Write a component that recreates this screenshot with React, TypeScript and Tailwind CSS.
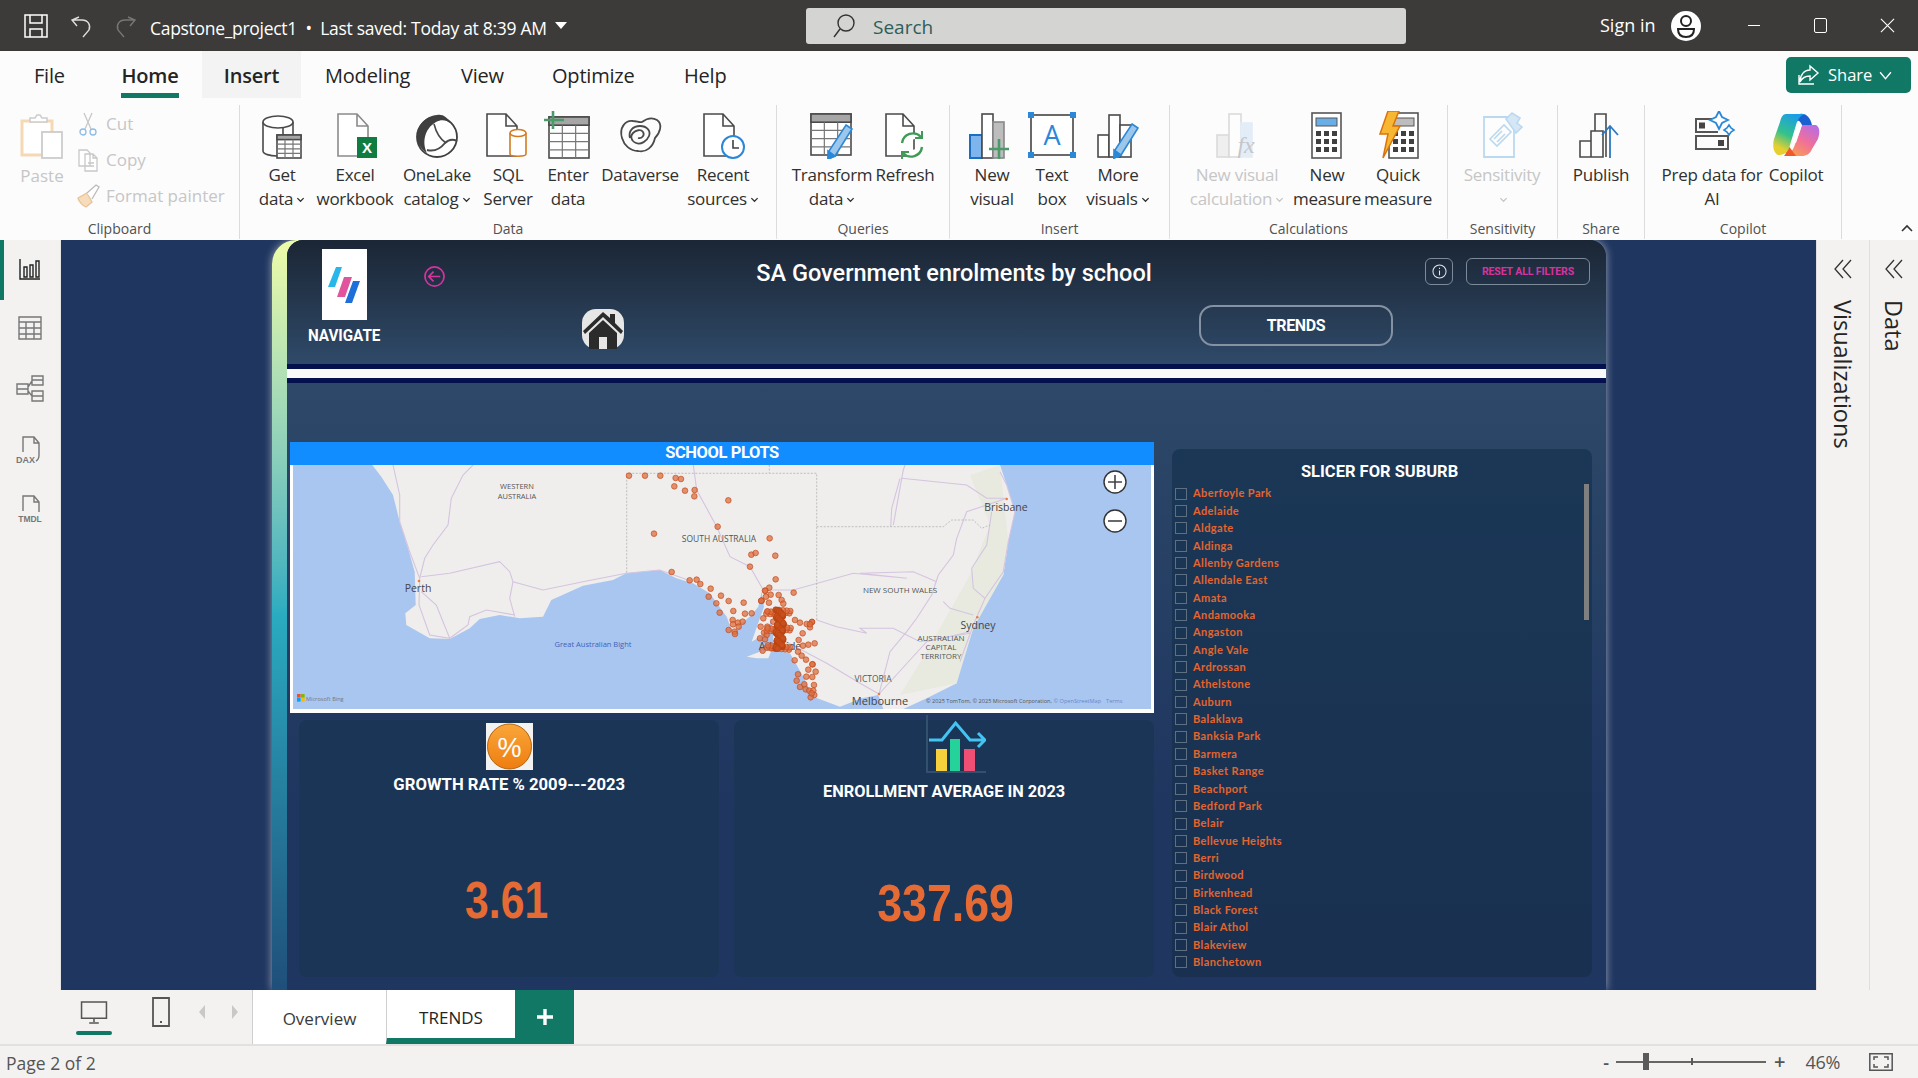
import type { ReactNode } from "react";

const ui = "font-['Open_Sans','Noto_Sans',sans-serif]";
const din = "font-['Roboto','Liberation_Sans',sans-serif]";

// Shared 48x48 icon box for the ribbon
function Ico({ children, dim }: { children: ReactNode; dim?: boolean }) {
	return (
		<svg viewBox="0 0 48 48" className={`h-[48px] w-[48px] shrink-0 ${dim ? "opacity-40" : ""}`} fill="none" stroke="#4a4a4a" strokeWidth="1.6">
			{children}
		</svg>
	);
}

const Doc = ({ x = 6, w = 28, h = 42 }: { x?: number; w?: number; h?: number }) => (
	<path d={`M${x} 3h${w - 11}l11 12v${h - 12}h-${w}zM${x + w - 11} 3v12h11`} fill="#fff" />
);

const Grid = ({ x, y, w, h }: { x: number; y: number; w: number; h: number }) => (
	<g>
		<rect x={x} y={y} width={w} height={h} fill="#fff" />
		<rect x={x} y={y} width={w} height={h / 5} fill="#a6a6a6" />
		<path d={`M${x} ${y + (h * 2) / 5}h${w}M${x} ${y + (h * 3) / 5}h${w}M${x} ${y + (h * 4) / 5}h${w}M${x + w / 3} ${y + h / 5}v${(h * 4) / 5}M${x + (2 * w) / 3} ${y + h / 5}v${(h * 4) / 5}`} strokeWidth="1.2" stroke="#777" />
	</g>
);

const Pencil = ({ dx = 0, dy = 0 }: { dx?: number; dy?: number }) => (
	<g transform={`translate(${dx} ${dy})`}>
		<path d="M38 14l6 4-17 27-7 3 1-8z" fill="#9cc7ea" stroke="#2b88d8" />
		<path d="M20 40l7 5-7 3z" fill="#2b88d8" stroke="#2b88d8" />
	</g>
);

const Bars = () => (
	<g>
		<rect x="4" y="24" width="11" height="22" fill="#fff" />
		<rect x="15" y="4" width="11" height="42" fill="#fff" />
		<rect x="26" y="14" width="11" height="32" fill="#fff" />
	</g>
);

const GetDataIcon = () => (
	<Ico>
		<path d="M5 11v29c0 3 7 5 14 5h6V11" fill="#fff" />
		<ellipse cx="20" cy="11" rx="15" ry="6" fill="#fff" />
		<path d="M35 11v16" />
		<Grid x={19} y={24} w={24} h={23} />
	</Ico>
);

const ExcelIcon = () => (
	<Ico>
		<g stroke="#8a8a8a">
			<Doc x={7} w={30} />
		</g>
		<rect x="26" y="26" width="20" height="21" fill="#107c41" stroke="none" />
		<text x="36" y="42" textAnchor="middle" fontSize="15" fontWeight="700" fill="#fff" stroke="none" fontFamily="Liberation Sans">X</text>
	</Ico>
);

const OneLakeIcon = () => (
	<Ico>
		<circle cx="24" cy="26" r="20" fill="#fff" stroke="#3f3f3f" strokeWidth="1.8" />
		<path d="M24 4C12 5 4 15 4 26c0 6 4 12 10 16-5-10-3-24 9-31 5-3 11-2 14 1-3-6-7-9-13-8z" fill="#3f3f3f" stroke="none" />
		<path d="M21 13c2 8 6 15 12 19" />
		<path d="M14 39c8 2 14-2 18-7 4-4 8-4 12-2" strokeWidth="2" />
	</Ico>
);

const SqlIcon = () => (
	<Ico>
		<Doc x={3} w={30} />
		<path d="M26 22v21c0 3 16 3 16 0V22" fill="#fff" stroke="#d47b20" />
		<ellipse cx="34" cy="22" rx="8" ry="3.5" fill="#fff" stroke="#d47b20" />
	</Ico>
);

const EnterDataIcon = () => (
	<Ico>
		<Grid x={5} y={6} w={40} h={41} />
		<path d="M9 0v18M0 9h20" stroke="#4c9a6a" strokeWidth="2.6" />
	</Ico>
);

const DataverseIcon = () => (
	<Ico>
		<path d="M6 27C3 17 9 9 17 10c4 0 6 2 9 1 4-3 10-5 15-2 6 4 3 13-2 18-2 9-9 15-17 13C14 40 8 34 6 27z" strokeWidth="1.8" />
		<path d="M14 27c-2-7 3-12 10-12 7 0 11 5 9 10s-8 9-13 7-6-7-3-10 8-4 10-1-1 7-5 6" strokeWidth="1.8" />
	</Ico>
);

const RecentIcon = () => (
	<Ico>
		<Doc x={5} w={30} />
		<circle cx="34" cy="36" r="11" fill="#fff" stroke="#2b88d8" strokeWidth="2" />
		<path d="M34 29v8h6" stroke="#404040" strokeWidth="1.6" />
	</Ico>
);

const TransformIcon = () => (
	<Ico>
		<Grid x={3} y={3} w={40} h={41} />
		<Pencil />
	</Ico>
);

const RefreshIcon = () => (
	<Ico>
		<Doc x={5} w={28} />
		<path d="M21 32a11 11 0 0 1 19-6M41 36a11 11 0 0 1-19 6" stroke="#3e9a56" strokeWidth="2.4" fill="#fff" />
		<path d="M41 20v7h-7M21 48v-7h7" stroke="#3e9a56" strokeWidth="2" />
	</Ico>
);

const NewVisualIcon = () => (
	<Ico>
		<rect x="2" y="24" width="12" height="23" fill="#7eb5ec" stroke="#1c6fc0" strokeWidth="2" />
		<rect x="14" y="3" width="11" height="44" fill="#fff" />
		<rect x="25" y="11" width="11" height="36" fill="#bdbdbd" stroke="#888" />
		<path d="M31 28v20M21 38h20" stroke="#4c9a6a" strokeWidth="2.6" />
	</Ico>
);

const TextBoxIcon = () => (
	<Ico>
		<rect x="3" y="4" width="42" height="40" fill="#fff" stroke="#444" strokeWidth="1.6" />
		<text x="24" y="34" textAnchor="middle" fontSize="27" fill="#2b88d8" stroke="none" fontFamily="Open Sans">A</text>
		<g fill="#2b88d8" stroke="none">
			<rect x="0" y="1" width="6" height="6" />
			<rect x="42" y="1" width="6" height="6" />
			<rect x="0" y="41" width="6" height="6" />
			<rect x="42" y="41" width="6" height="6" />
		</g>
	</Ico>
);

const MoreVisualsIcon = () => (
	<Ico>
		<Bars />
		<Pencil dx={0} dy={-1} />
	</Ico>
);

const VisualCalcIcon = () => (
	<Ico dim>
		<rect x="4" y="24" width="12" height="22" fill="#ddd" stroke="#aaa" />
		<rect x="16" y="3" width="12" height="43" fill="#fff" stroke="#aaa" />
		<rect x="28" y="12" width="11" height="34" fill="#bcd8f2" stroke="#bcd8f2" />
		<text x="33" y="42" textAnchor="middle" fontSize="24" fontStyle="italic" fill="#777" stroke="none" fontFamily="Liberation Serif">fx</text>
	</Ico>
);

const Calculator = ({ accent }: { accent: string }) => (
	<g>
		<rect x="9" y="2" width="29" height="45" fill="#fff" stroke="#555" />
		<rect x="13" y="7" width="21" height="8" fill={accent} stroke="#555" strokeWidth="1" />
		{[20, 28, 36].map((y) => (
			<g key={y} fill="#404040" stroke="none">
				<rect x="13" y={y} width="5" height="5" />
				<rect x="21" y={y} width="5" height="5" />
				<rect x="29" y={y} width="5" height="5" />
			</g>
		))}
	</g>
);

const NewMeasureIcon = () => (
	<Ico>
		<Calculator accent="#6aaee8" />
	</Ico>
);

const QuickMeasureIcon = () => (
	<Ico>
		<g transform="translate(6 0)">
			<Calculator accent="#bdbdbd" />
		</g>
		<path d="M14 0h11l-6 15h7L9 47l5-24H6z" fill="#f7b733" stroke="#d9730d" strokeWidth="1.5" />
	</Ico>
);

const SensitivityIcon = () => (
	<Ico dim>
		<path d="M6 6h30v40H6z" fill="#fff" stroke="#5aa7e0" strokeWidth="1.8" />
		<path d="M12 28l14-14 7 7-14 14zM16 28l8-8M19 31l8-8" stroke="#5aa7e0" />
		<path d="M28 8l6-6 8 5-3 5 5 4-6 6z" fill="#9cc7ea" stroke="#5aa7e0" />
	</Ico>
);

const PublishIcon = () => (
	<Ico>
		<path d="M3 30h11v16H3zM14 20h12v26H14zM18 20V3h11v43" />
		<path d="M33 47V15M25 24l8-9 8 9" stroke="#2b79c2" strokeWidth="1.8" />
	</Ico>
);

const PrepDataIcon = () => (
	<Ico>
		<path d="M30 8H8v13h22" stroke="#555" strokeWidth="2" />
		<rect x="11" y="11.5" width="6" height="6" fill="#444" stroke="none" />
		<rect x="8" y="25" width="32" height="13" stroke="#555" strokeWidth="2" />
		<rect x="30" y="29" width="6" height="6" fill="#444" stroke="none" />
		<path d="M31 0l3 6 6 3-6 3-3 6-3-6-6-3 6-3z" fill="#fff" stroke="#2b88d8" strokeWidth="1.8" />
		<path d="M41 14l2 3 3 2-3 2-2 3-2-3-3-2 3-2z" fill="#fff" stroke="#2b88d8" strokeWidth="1.6" />
	</Ico>
);

const CopilotIcon = () => (
	<svg viewBox="0 0 48 48" className="h-[48px] w-[48px] shrink-0">
		<defs>
			<linearGradient id="cpA" x1="0.6" y1="0" x2="0.2" y2="1">
				<stop offset="0" stopColor="#1b9de8" />
				<stop offset="0.5" stopColor="#35c28a" />
				<stop offset="0.85" stopColor="#e6d030" />
			</linearGradient>
			<linearGradient id="cpB" x1="0.9" y1="0" x2="0.2" y2="1">
				<stop offset="0" stopColor="#b46ce8" />
				<stop offset="0.5" stopColor="#f0709a" />
				<stop offset="1" stopColor="#f9a24a" />
			</linearGradient>
		</defs>
		<path d="M28 3c6-1 10 3 12 11H30c-2-4-4-6-6-2z" fill="#1c5fd0" />
		<path d="M30 14h14c4 2 4 8 2 14l-6 10c-2 5-6 7-10 7H12c6-1 8-5 10-9l6-16z" fill="url(#cpB)" />
		<path d="M16 34l8 11H12c2-2 3-6 4-11z" fill="#ef5a2a" />
		<path d="M14 3h20c-6 1-8 5-10 11l-6 20c-2 8-6 10-12 10-4-2-6-8-4-16L8 11c1-5 3-8 6-8z" fill="url(#cpA)" />
		<path d="M26 14h4l-6 18h-4z" fill="#fff" opacity="0.9" />
	</svg>
);

const PasteIcon = () => (
	<svg viewBox="0 0 44 46" className="h-[46px] w-[44px]" fill="none">
		<path d="M2 8h30v34H2z" fill="#fff" stroke="#f5d9b5" strokeWidth="3" />
		<path d="M10 9V5h5l2-3h3l2 3h5v4z" fill="#fff" stroke="#ccc" strokeWidth="1.5" />
		<rect x="22" y="19" width="20" height="26" fill="#fff" stroke="#ccc" strokeWidth="1.8" />
	</svg>
);

const SmallDisabled = ({ kind }: { kind: "cut" | "copy" | "paint" }) => (
	<svg viewBox="0 0 24 24" className="h-[24px] w-[24px]" fill="none" stroke="#c8c8c8" strokeWidth="1.3">
		{kind === "cut" && (
			<g>
				<path d="M8 1l7 16M16 1L9 17" />
				<circle cx="7" cy="20" r="3" stroke="#8fbce6" />
				<circle cx="17" cy="20" r="3" stroke="#8fbce6" />
			</g>
		)}
		{kind === "copy" && <path d="M3 2h8l3 3v13H3zM9 6h8l4 4v13H9zM17 6v4h4M12 15h6M12 18h6" fill="#fff" />}
		{kind === "paint" && (
			<g>
				<path d="M2 14l9-5 5 9-6 5c-3-1-7-5-8-9z" fill="#f7dcbc" stroke="#e8c39a" />
				<path d="M11 9l9-8 3 2-7 12" stroke="#bbb" fill="#fff" />
			</g>
		)}
	</svg>
);

type Item = { w: number; icon: ReactNode; top: string; bottom?: string; caret?: boolean; dim?: boolean };

const Caret = () => (
	<svg viewBox="0 0 10 10" className="ml-[3px] inline-block h-[9px] w-[9px]" fill="none" stroke="currentColor" strokeWidth="1.4">
		<path d="M1.5 3.5L5 7l3.5-3.5" />
	</svg>
);

function RibbonItem({ w, icon, top, bottom, caret, dim }: Item) {
	return (
		<div style={{ width: w }} className={`flex shrink-0 flex-col items-center whitespace-nowrap pt-[5px] text-[17px] leading-[24px] tracking-[-0.25px] ${dim ? "text-[#c6c6c6]" : "text-[#303030]"}`}>
			<div className="flex h-[50px] items-center justify-center">{icon}</div>
			<div className="mt-[3px] flex h-[24px] items-center">{top}</div>
			<div className="flex h-[24px] items-center">
				{bottom}
				{caret && <Caret />}
			</div>
		</div>
	);
}

function RibbonGroup({ w, label, children }: { w: number; label: string; children: ReactNode }) {
	return (
		<div style={{ width: w }} className="flex h-[134px] shrink-0 flex-col border-r border-[#dcdcdc]">
			<div className="flex flex-1">{children}</div>
			<div className="text-center text-[14px] leading-[20px] text-[#505050]">{label}</div>
		</div>
	);
}

function TitleBar() {
	return (
		<div className="flex h-[51px] items-center bg-[#3c3b39] text-white">
			<svg viewBox="0 0 24 24" className="ml-[24px] h-[24px] w-[24px]" fill="none" stroke="#fff" strokeWidth="1.5">
				<path d="M1 1h22v22H1zM6 1v8h12V1M6 23v-8h12v8" />
			</svg>
			<svg viewBox="0 0 24 24" className="ml-[21px] h-[24px] w-[24px]" fill="none" stroke="#ddd" strokeWidth="1.4">
				<path d="M8 12L3 6l7-3M3 6h10c6 0 9 5 7 10l-6 7" />
			</svg>
			<svg viewBox="0 0 24 24" className="ml-[21px] h-[24px] w-[24px]" fill="none" stroke="#777" strokeWidth="1.4">
				<path d="M16 12l5-6-7-3M21 6H11C5 6 2 11 4 16l6 7" />
			</svg>
			<div className={`${ui} ml-[12px] w-[396px] whitespace-nowrap pt-[6px] text-[17.5px] tracking-[-0.3px]`}>Capstone_project1 &nbsp;•&nbsp; Last saved: Today at 8:39 AM</div>
			<div className="ml-[9px] h-0 w-0 border-x-[6px] border-t-[7px] border-x-transparent border-t-white" />
			<div className="ml-[239px] flex h-[36px] w-[600px] items-center rounded-[3px] bg-[#d4d4d2]">
				<svg viewBox="0 0 24 24" className="ml-[26px] h-[24px] w-[24px]" fill="none" stroke="#333" strokeWidth="1.4">
					<circle cx="14" cy="9" r="8" />
					<path d="M8 15l-6 8" />
				</svg>
				<span className={`${ui} ml-[17px] pt-[3px] text-[19px] text-[#2f5d59]`}>Search</span>
			</div>
			<div className={`${ui} ml-[194px] text-[18px]`}>Sign in</div>
			<svg viewBox="0 0 30 30" className="ml-[15px] h-[30px] w-[30px]">
				<circle cx="15" cy="15" r="15" fill="#fff" />
				<circle cx="15" cy="10" r="5" fill="none" stroke="#222" strokeWidth="2" />
				<path d="M7 18h16c0 6-3 8-8 8s-8-2-8-8z" fill="none" stroke="#222" strokeWidth="2" />
			</svg>
			<div className="ml-[47px] h-[1.5px] w-[12px] bg-white" />
			<div className="ml-[54px] h-[15px] w-[13px] rounded-[2px] border border-white" />
			<svg viewBox="0 0 16 16" className="ml-[53px] h-[15px] w-[15px]" fill="none" stroke="#fff" strokeWidth="1.2">
				<path d="M1 1l14 14M15 1L1 15" />
			</svg>
		</div>
	);
}

function Ribbon() {
	return (
		<div className={`${ui} h-[189px] bg-[#fcfcfc] shadow-[0_1px_3px_rgba(0,0,0,0.15)]`}>
			<div className="flex h-[47px] pr-[7px]">
				<div className="flex h-full pl-[34px] text-[20px] tracking-[-0.2px] text-[#252423]">
					<div className="flex w-[87px] items-center pt-[3px]">File</div>
					<div className="flex w-[81px] flex-col font-semibold">
						<span className="flex h-full w-[58px] items-center justify-center border-b-[5px] border-[#117865] pt-[8px]">Home</span>
					</div>
					<div className="flex w-[99px] items-center justify-center bg-[#f3f3f3] pt-[3px] font-semibold">Insert</div>
					<div className="ml-[24px] flex w-[136px] items-center pt-[3px]">Modeling</div>
					<div className="flex w-[91px] items-center pt-[3px]">View</div>
					<div className="flex w-[132px] items-center pt-[3px]">Optimize</div>
					<div className="flex items-center pt-[3px]">Help</div>
				</div>
				<div className="ml-auto mt-[6px] flex h-[36px] w-[125px] items-center rounded-[5px] bg-[#117865] pl-[10px] text-[16.5px] text-white">
					<svg viewBox="0 0 24 24" className="h-[24px] w-[24px]" fill="none" stroke="#fff" strokeWidth="1.4">
						<path d="M3 12v9h15M14 3l8 7-8 7v-4c-5 0-8 2-10 6 0-7 4-12 10-12z" />
					</svg>
					<span className="ml-[8px]">Share</span>
					<svg viewBox="0 0 12 12" className="ml-[7px] h-[13px] w-[13px]" fill="none" stroke="#fff" strokeWidth="1.2">
						<path d="M1 3l5 6 5-6" />
					</svg>
				</div>
			</div>

			<div className="flex pt-[7px]">
				<RibbonGroup w={240} label="Clipboard">
					<div className="flex w-[84px] shrink-0 flex-col items-center text-[17px] text-[#c6c6c6]">
						<div className="mt-[8px]">
							<PasteIcon />
						</div>
						<div className="mt-[5px] leading-[24px]">Paste</div>
					</div>
					<div className="-ml-[8px] flex flex-col pt-[1px] text-[17px] leading-[36px] text-[#c6c6c6]">
						<div className="flex items-center gap-[6px]">
							<SmallDisabled kind="cut" />
							Cut
						</div>
						<div className="flex items-center gap-[6px]">
							<SmallDisabled kind="copy" />
							Copy
						</div>
						<div className="flex items-center gap-[6px] whitespace-nowrap">
							<SmallDisabled kind="paint" />
							Format painter
						</div>
					</div>
				</RibbonGroup>
				<RibbonGroup w={537} label="Data">
					<RibbonItem w={84} icon={<GetDataIcon />} top="Get" bottom="data" caret />
					<RibbonItem w={62} icon={<ExcelIcon />} top="Excel" bottom="workbook" />
					<RibbonItem w={102} icon={<OneLakeIcon />} top="OneLake" bottom="catalog" caret />
					<RibbonItem w={40} icon={<SqlIcon />} top="SQL" bottom="Server" />
					<RibbonItem w={80} icon={<EnterDataIcon />} top="Enter" bottom="data" />
					<RibbonItem w={64} icon={<DataverseIcon />} top="Dataverse" />
					<RibbonItem w={102} icon={<RecentIcon />} top="Recent" bottom="sources" caret />
				</RibbonGroup>
				<RibbonGroup w={173} label="Queries">
					<RibbonItem w={110} icon={<TransformIcon />} top="Transform" bottom="data" caret />
					<RibbonItem w={36} icon={<RefreshIcon />} top="Refresh" />
				</RibbonGroup>
				<RibbonGroup w={220} label="Insert">
					<RibbonItem w={84} icon={<NewVisualIcon />} top="New" bottom="visual" />
					<RibbonItem w={36} icon={<TextBoxIcon />} top="Text" bottom="box" />
					<RibbonItem w={96} icon={<MoreVisualsIcon />} top="More" bottom="visuals" caret />
				</RibbonGroup>
				<RibbonGroup w={278} label="Calculations">
					<RibbonItem w={134} icon={<VisualCalcIcon />} top="New visual" bottom="calculation" caret dim />
					<RibbonItem w={46} icon={<NewMeasureIcon />} top="New" bottom="measure" />
					<RibbonItem w={96} icon={<QuickMeasureIcon />} top="Quick" bottom="measure" />
				</RibbonGroup>
				<RibbonGroup w={110} label="Sensitivity">
					<RibbonItem w={108} icon={<SensitivityIcon />} top="Sensitivity" caret dim />
				</RibbonGroup>
				<RibbonGroup w={87} label="Share">
					<RibbonItem w={86} icon={<PublishIcon />} top="Publish" />
				</RibbonGroup>
				<RibbonGroup w={197} label="Copilot">
					<RibbonItem w={134} icon={<PrepDataIcon />} top="Prep data for" bottom="AI" />
					<RibbonItem w={34} icon={<CopilotIcon />} top="Copilot" />
				</RibbonGroup>
				<div className="flex flex-1 items-end justify-end pb-[7px] pr-[5px]">
					<svg viewBox="0 0 12 8" className="h-[8px] w-[12px]" fill="none" stroke="#333" strokeWidth="1.6">
						<path d="M1 7l5-5 5 5" />
					</svg>
				</div>
			</div>
		</div>
	);
}

function LeftRail() {
	return (
		<div className="flex w-[61px] shrink-0 flex-col items-center border-r border-[#e4e4e4] bg-[#f3f2f1]">
			<div className="flex h-[60px] w-full items-center justify-center border-l-[4px] border-[#117865]">
				<svg viewBox="0 0 22 22" className="-ml-[4px] h-[22px] w-[22px]" fill="none" stroke="#222" strokeWidth="1.4">
					<path d="M1 0v20h20M5 8h3v10H5zM11 6h3v12h-3zM17 2h3v16h-3z" />
				</svg>
			</div>
			<svg viewBox="0 0 24 24" className="mt-[16px] h-[24px] w-[24px]" fill="none" stroke="#777" strokeWidth="1.4">
				<path d="M1 1h22v22H1zM1 6h22M1 12h22M1 18h22M8 6v17M16 6v17" />
			</svg>
			<svg viewBox="0 0 28 28" className="mt-[35px] h-[28px] w-[28px]" fill="none" stroke="#777" strokeWidth="1.4">
				<path d="M1 9h11v10H1zM1 14h11M16 1h11v9H16zM16 5h11M16 16h11v10H16zM16 21h11M12 12l4-6M12 16l4 5" />
			</svg>
			<svg viewBox="0 0 28 28" className="mt-[33px] h-[28px] w-[28px]" fill="none" stroke="#777" strokeWidth="1.4">
				<path d="M7 16V1h11l5 6v12c0 4-1 5-3 6M18 1v6h5" />
				<text x="0" y="27" fontSize="9" fontWeight="700" fill="#777" stroke="none" fontFamily="Liberation Sans">DAX</text>
			</svg>
			<svg viewBox="0 0 28 28" className="mt-[31px] h-[28px] w-[28px]" fill="none" stroke="#777" strokeWidth="1.4">
				<path d="M7 16V1h11l5 6v10M18 1v6h5" />
				<text x="14" y="27" textAnchor="middle" fontSize="8.5" fontWeight="700" fill="#777" stroke="none" fontFamily="Liberation Sans">TMDL</text>
			</svg>
		</div>
	);
}

// Map points are read off the picture at 3x, each group has its own origin
const W = (x: number, y: number) => `${(293 + x / 3).toFixed(1)} ${(465 + y / 3).toFixed(1)}`;
const S = (x: number, y: number) => `${(560 + x / 3).toFixed(1)} ${(450 + y / 3).toFixed(1)}`;
const E = (x: number, y: number) => `${(860 + x / 3).toFixed(1)} ${(465 + y / 3).toFixed(1)}`;

const coast =
	"M" +
	[
		W(238, 0), W(265, 35), W(300, 90), W(320, 170), W(345, 250), W(365, 320), W(368, 420), W(337, 445), W(340, 480), W(410, 520), W(470, 522),
		W(530, 490), W(560, 462), W(620, 450), W(680, 460), W(750, 455), W(775, 405), W(870, 362), W(960, 345), W(1000, 325), W(1100, 315),
		W(1150, 340), W(1200, 355), W(1250, 385), W(1290, 440), S(500, 500), S(520, 555), S(545, 520), S(575, 495), S(595, 470), S(605, 425),
		S(612, 470), S(598, 510), S(575, 575), S(600, 560), S(625, 545), S(632, 505), S(640, 560), S(640, 600), S(690, 610), S(730, 680),
		S(760, 740), S(840, 770), S(905, 745), S(955, 735), E(70, 732), E(130, 732), E(200, 700), E(290, 655), E(300, 590), E(340, 490),
		E(375, 400), E(430, 330), E(445, 230), E(465, 140), E(440, 60), E(420, 0),
	].join("L") +
	"Z";

const island = "M" + [S(560, 620), S(600, 605), S(635, 600), S(625, 625), S(590, 625)].join("L") + "Z";
const hills = "M" + [E(330, 30), E(420, 0), E(445, 230), E(430, 330), E(340, 490), E(290, 655), E(120, 690), E(200, 560), E(330, 330), E(390, 180)].join("L") + "Z";

const line = (pts: string[]) => "M" + pts.join("L");

const roads = [
	line([W(540, 0), W(510, 30), W(475, 100), W(465, 180), W(420, 240), W(395, 280), W(380, 340)]),
	line([W(300, 0), W(320, 90), W(320, 170), W(350, 260), W(380, 340), W(378, 420), W(410, 510), W(470, 520), W(525, 480), W(530, 455), W(580, 435), W(665, 450)]),
	line([W(385, 335), W(470, 325), W(620, 290), W(650, 320), W(660, 350), W(750, 375), W(870, 350), W(1000, 325), W(1100, 315), W(1200, 350)]),
	line([W(660, 350), W(650, 400), W(665, 455)]),
	line([W(385, 380), W(430, 420), W(470, 520)]),
	line([S(400, 45), S(410, 120), S(470, 230), S(510, 320), S(570, 350), S(610, 420)]),
	line([S(610, 420), S(700, 420), S(880, 370), S(1040, 385), E(0, 325), E(160, 320), E(230, 350)]),
	line([S(1000, 225), S(1030, 60), E(135, 0)]),
	line([S(650, 560), S(800, 640), S(900, 700), E(57, 687)]),
	line([S(770, 510), S(830, 530), S(920, 550), E(0, 490), E(100, 490), E(180, 530), E(330, 505)]),
	line([E(120, 40), E(95, 130), E(92, 185)]),
	line([E(125, 40), E(320, 60), E(380, 100), E(440, 100)]),
	line([E(440, 100), E(320, 140), E(290, 220), E(280, 270), E(235, 330), E(215, 390), E(170, 460), E(140, 500), E(90, 560), E(57, 687)]),
	line([E(395, 140), E(380, 240), E(335, 310), E(340, 370), E(375, 400)]),
	line([E(57, 687), E(150, 585), E(200, 530), E(330, 500)]),
	line([E(250, 410), E(270, 430), E(340, 450)]),
	line([E(420, 20), E(440, 60), E(465, 140), E(445, 230), E(430, 320), E(375, 400), E(340, 480), E(300, 590)]),
];

const borders = [line([S(200, 368), S(200, 70), S(770, 70), S(770, 510)]), line([S(628, 45), S(628, 68)]), line([S(770, 230), E(0, 185), E(250, 185), E(275, 165), E(340, 165), E(365, 190), E(390, 180)])];

const scatter: [number, number][] = [
	[207, 77], [255, 77], [301, 77], [347, 84], [363, 87], [343, 109], [375, 122], [404, 120], [403, 139], [505, 151], [473, 230], [282, 251],
	[629, 265], [574, 314], [587, 309], [646, 317], [570, 350], [647, 388], [335, 366], [389, 391], [410, 389], [421, 402], [452, 416], [628, 413],
	[701, 428], [446, 440], [483, 437], [506, 453], [469, 460], [551, 458], [479, 488], [520, 483], [555, 491], [575, 490], [518, 510], [534, 518],
	[548, 515], [519, 523], [536, 530], [506, 540], [524, 545], [525, 552], [605, 452], [604, 453], [616, 422], [632, 434], [656, 435], [665, 450],
	[670, 461], [627, 458], [705, 510], [720, 518], [740, 522], [756, 516], [750, 532], [728, 550], [716, 570], [764, 580], [745, 584], [729, 587],
	[714, 605], [725, 617], [738, 629], [704, 631], [758, 643], [745, 659], [767, 665], [714, 673], [739, 680], [757, 681], [710, 692], [720, 711],
	[733, 703], [762, 705], [737, 718], [748, 722], [760, 722], [763, 735], [752, 742], [755, 730], [610, 505], [602, 530], [622, 530], [612, 548],
	[620, 555], [600, 565], [615, 568], [608, 602], [635, 595], [623, 485], [640, 515], [615, 422], [604, 452], [756, 516], [750, 523], [757, 643],
];

// Dense Adelaide suburbs: a narrow core and a wider spread around it
const core: [number, number][] = Array.from({ length: 160 }, (_, i) => [648 + ((i * 37) % 23), 480 + ((i * 61) % 117)]);
const spread: [number, number][] = Array.from({ length: 45 }, (_, i) => [618 + ((i * 23) % 80), 440 + ((i * 53) % 160)]);

function MapVisual() {
	return (
		<div className="h-[271px] w-[864px]">
			<div className={`${din} flex h-[23px] items-center justify-center bg-[#118dff] text-[16.5px] font-bold tracking-[-0.4px] text-white`}>SCHOOL PLOTS</div>
			<div className="relative h-[248px] border-x-[3px] border-b-[4px] border-white bg-[#a9c6f0]">
				<svg viewBox="293 465 858 244" className="block h-[244px] w-[858px]" fontFamily="Open Sans">
					<path d={coast} fill="#efeeec" />
					<path d={island} fill="#efeeec" />
					<path d={hills} fill="#e8eae0" />
					{roads.map((d) => (
						<path key={d} d={d} fill="none" stroke="#d4c4e0" strokeWidth="1.1" />
					))}
					{borders.map((d) => (
						<path key={d} d={d} fill="none" stroke="#aaa" strokeWidth="0.7" strokeDasharray="2 1.5" />
					))}
					<g fill="#ef7d3c">
						<circle cx="419" cy="581" r="1.3" />
						<circle cx="1006.7" cy="499" r="1.3" />
						<circle cx="977.3" cy="617.3" r="1.3" />
						<circle cx="879" cy="694" r="1.3" />
					</g>
					<g fill="#555" textAnchor="middle" fontSize="7.5">
						<text x="517" y="489">WESTERN</text>
						<text x="517" y="499">AUSTRALIA</text>
						<text x="719" y="542" fontSize="8.5">SOUTH AUSTRALIA</text>
						<text x="900" y="593" fontSize="8">NEW SOUTH WALES</text>
						<text x="941" y="641" fontSize="8">AUSTRALIAN</text>
						<text x="941" y="650" fontSize="8">CAPITAL</text>
						<text x="941" y="659" fontSize="8">TERRITORY</text>
						<text x="873" y="682" fontSize="8.5">VICTORIA</text>
					</g>
					<g fill="#444" textAnchor="middle" fontSize="10.5">
						<text x="418" y="592">Perth</text>
						<text x="1006" y="511">Brisbane</text>
						<text x="978" y="629">Sydney</text>
						<text x="880" y="705" fontSize="11">Melbourne</text>
						<text x="780" y="650">Adelaide</text>
					</g>
					<text x="593" y="647" textAnchor="middle" fontSize="7.5" fill="#3f62b5">Great Australian Bight</text>
					<text x="926" y="702.5" fontSize="5.6" fill="#555">
						© 2025 TomTom, © 2025 Microsoft Corporation, <tspan fill="#6b86c8">© OpenStreetMap</tspan>
						<tspan fill="#6b86c8" dx="5">Terms</tspan>
					</text>
					<g>
						<rect x="297" y="694" width="3.6" height="3.6" fill="#f25022" />
						<rect x="301" y="694" width="3.6" height="3.6" fill="#7fba00" />
						<rect x="297" y="698" width="3.6" height="3.6" fill="#00a4ef" />
						<rect x="301" y="698" width="3.6" height="3.6" fill="#ffb900" />
					</g>
					<text x="306" y="700.5" fontSize="5.6" fill="#777">Microsoft Bing</text>
					<g transform="translate(560 450) scale(0.3333)">
						{[...scatter, ...spread].map(([x, y], i) => (
							<circle key={i} cx={x} cy={y} r="8.5" fill="#dd6f40" fillOpacity="0.75" stroke="#c2491a" strokeWidth="2" />
						))}
						{core.map(([x, y], i) => (
							<circle key={i} cx={x} cy={y} r="8.5" fill="#c9501f" fillOpacity="0.8" stroke="#b8420f" strokeWidth="2" />
						))}
					</g>
				</svg>
				<div className="absolute right-[24px] top-[5px] flex flex-col gap-[15px]">
					<ZoomDot sign="+" />
					<ZoomDot sign="-" />
				</div>
			</div>
		</div>
	);
}

function ZoomDot({ sign }: { sign: "+" | "-" }) {
	return (
		<svg viewBox="0 0 24 24" className="h-[24px] w-[24px]" fill="none">
			<circle cx="12" cy="12" r="11" fill="#fff" stroke="#333" strokeWidth="1.4" />
			<path d={sign === "+" ? "M5 12h14M12 5v14" : "M5 12h14"} stroke="#444" strokeWidth="1.6" />
		</svg>
	);
}

const PercentBadge = () => (
	<svg viewBox="0 0 47 47" className="h-[47px] w-[47px]">
		<defs>
			<linearGradient id="pc" x1="0" y1="0" x2="0" y2="1">
				<stop offset="0" stopColor="#f9a63a" />
				<stop offset="1" stopColor="#ef7d10" />
			</linearGradient>
		</defs>
		<rect width="47" height="47" fill="#f2f2f2" />
		<ellipse cx="23.5" cy="23.5" rx="22" ry="22.5" fill="url(#pc)" stroke="#b4650f" />
		<text x="23.5" y="34" textAnchor="middle" fontSize="27" fill="#fff" fontFamily="Liberation Sans">%</text>
	</svg>
);

const TrendBadge = () => (
	<svg viewBox="0 0 60 60" className="-mt-[8px] ml-[24px] h-[60px] w-[60px]" fill="none">
		<path d="M1 0v57h59" stroke="#33506f" strokeWidth="2" />
		<rect x="10" y="34" width="11" height="22" fill="#f7d13c" />
		<rect x="24" y="24" width="10" height="32" fill="#25d39a" />
		<rect x="38" y="34" width="11" height="22" fill="#ee4f72" />
		<path d="M3 25h13L29.6 8 44 25h14M52 18l7 7-7 7" stroke="#43c4f2" strokeWidth="3" />
	</svg>
);

type Kpi = { title: string; value: string; icon: ReactNode; titleClass: string; valueClass: string };

function KpiCard({ title, value, icon, titleClass, valueClass }: Kpi) {
	return (
		<div className="flex h-[257px] w-[421px] flex-col items-center rounded-[8px] bg-[#1b3556]">
			<div className="h-[50px] pt-[3px]">{icon}</div>
			<div className={`${din} ${titleClass} whitespace-nowrap text-[17px] font-bold leading-[22px] text-white`}>{title}</div>
			<div className={`${valueClass} font-['Liberation_Sans',sans-serif] text-[52px] font-bold leading-[52px] text-[#e66a34]`}>{value}</div>
		</div>
	);
}

const suburbs = [
	"Aberfoyle Park", "Adelaide", "Aldgate", "Aldinga", "Allenby Gardens", "Allendale East", "Amata", "Andamooka", "Angaston", "Angle Vale",
	"Ardrossan", "Athelstone", "Auburn", "Balaklava", "Banksia Park", "Barmera", "Basket Range", "Beachport", "Bedford Park", "Belair",
	"Bellevue Heights", "Berri", "Birdwood", "Birkenhead", "Black Forest", "Blair Athol", "Blakeview", "Blanchetown",
];

function Slicer() {
	return (
		<div className="ml-[18px] mt-[7px] flex h-[528px] w-[420px] flex-col rounded-[8px] bg-gradient-to-b from-[#1b3756] to-[#193050] px-[3px]">
			<div className={`${din} mt-[11px] h-[23px] scale-x-[0.97] pr-[5px] text-center text-[17px] font-bold leading-[23px] text-white`}>SLICER FOR SUBURB</div>
			<div className="flex">
				<div className="flex-1 pt-[2px]">
					{suburbs.map((s) => (
						<div key={s} className="flex h-[17.37px] items-center">
							<span className="h-[12px] w-[12px] border border-[#5f6f82]" />
							<span className="ml-[6px] font-['Lato',sans-serif] text-[11px] font-bold tracking-[0.4px] text-[#e4652d]">{s}</span>
						</div>
					))}
				</div>
				<div className="mt-[1px] h-[136px] w-[5px] bg-[#7f7f7f]" />
			</div>
		</div>
	);
}

function ReportPage() {
	return (
		<div className="ml-[211px] w-[1334px] rounded-tl-[24px] rounded-tr-[16px] bg-gradient-to-b from-[#eefca8] via-[#2aabc0] to-[#1f4f7a] pl-[15px] shadow-[0_0_9px_rgba(255,255,255,0.55)]">
			<div className="h-full rounded-t-[16px] bg-[#1f3660]">
				<div className="flex h-[124px] rounded-t-[16px] bg-gradient-to-b from-[#1b2635] to-[#2f4a69]">
					<div className="ml-[20px] flex w-[74px] flex-col items-center pt-[9px]">
						<div className="flex h-[71px] w-[45px] items-center justify-center bg-white">
							<svg viewBox="0 0 32 36" className="h-[36px] w-[32px]">
								<path d="M8 0h6L7 20H0z" fill="#29b6e8" />
								<path d="M16 10h8l-7 20H9z" fill="#e0559b" />
								<path d="M25 14h7l-8 22h-7z" fill="#1e6fd9" />
							</svg>
						</div>
						<div className={`${din} mt-[6px] scale-x-[0.95] whitespace-nowrap text-[16px] font-bold leading-[20px] text-white`}>NAVIGATE</div>
					</div>
					<svg viewBox="0 0 22 22" className="ml-[43px] mt-[26px] h-[21px] w-[21px]" fill="none" stroke="#d6339f" strokeWidth="1.8">
						<circle cx="11" cy="11" r="10" />
						<path d="M17 11H5M10 6l-5 5 5 5" />
					</svg>
					<div className="ml-[137px] mt-[69px] flex h-[40px] w-[42px] items-center justify-center rounded-[14px] bg-[#e6e6e6]">
						<svg viewBox="0 0 42 40" className="h-[40px] w-[42px]" fill="#2b2b2b">
							<path d="M21 3L1 22l2 3L21 8l18 17 2-3-8-8V5h-5v4z" />
							<path d="M21 11L7 24v16h10V28h8v12h10V24z" />
						</svg>
					</div>
					<div className={`${din} ml-[85px] mt-[17px] h-[32px] w-[490px] text-center text-[23.5px] font-medium leading-[32px] text-white`}>SA Government enrolments by school</div>
					<div className="flex flex-col pt-[18px]">
						<div className="ml-[226px] flex gap-[13px]">
							<div className="flex h-[27px] w-[28px] items-center justify-center rounded-[6px] border border-[#7d8a9a]">
								<svg viewBox="0 0 16 16" className="h-[15px] w-[15px]" fill="none" stroke="#e6e6e6" strokeWidth="1.1">
									<circle cx="8" cy="8" r="7" />
									<path d="M8 7v5M8 4v1.4" />
								</svg>
							</div>
							<div className={`${din} flex h-[27px] w-[124px] items-center justify-center rounded-[6px] border border-[#7d8a9a] text-[10.5px] font-bold tracking-[-0.1px] text-[#d6339f]`}>RESET ALL FILTERS</div>
						</div>
						<div className={`${din} mt-[20px] flex h-[41px] w-[194px] items-center justify-center rounded-[14px] border-2 border-[#8492a3] text-[16px] font-bold tracking-[-0.4px] text-white`}>TRENDS</div>
					</div>
				</div>
				<div className="h-[19px] border-y-[5px] border-[#04114e] bg-[#f7f9fa]" />
				<div className="h-[607px] bg-gradient-to-b from-[#2d4868] to-[#1f3660] to-70% pt-[59px]">
					<div className="flex pl-[3px]">
						<div className="flex w-[864px] flex-col">
							<MapVisual />
							<div className="ml-[9px] mt-[7px] flex gap-[15px]">
								<KpiCard title="GROWTH RATE % 2009---2023" value="3.61" icon={<PercentBadge />} titleClass="mt-[3px] scale-x-[0.98]" valueClass="-ml-[5px] mt-[79px] scale-x-[0.82]" />
								<KpiCard title="ENROLLMENT AVERAGE IN 2023" value="337.69" icon={<TrendBadge />} titleClass="mt-[10px] scale-x-[0.96]" valueClass="ml-[4px] mt-[75px] scale-x-[0.86]" />
							</div>
						</div>
						<Slicer />
					</div>
				</div>
			</div>
		</div>
	);
}

const Chevrons = () => (
	<svg viewBox="0 0 20 20" className="h-[20px] w-[20px]" fill="none" stroke="#333" strokeWidth="1.3">
		<path d="M10 1L2 10l8 9M18 1l-8 9 8 9" />
	</svg>
);

function SidePanel({ label, w }: { label: string; w: string }) {
	return (
		<div className={`${ui} ${w} flex shrink-0 flex-col items-center border-l border-[#e1dfdd] bg-[#f3f2f1] pt-[19px] text-[23.5px] leading-[28px] text-[#252423]`}>
			<Chevrons />
			<div className="mt-[21px] [writing-mode:vertical-rl]">{label}</div>
		</div>
	);
}

function PageTabs() {
	return (
		<div className={`${ui} flex h-[54px] bg-[#f3f2f1] pl-[61px] text-[#252423]`}>
			<div className="flex w-[191px] items-start">
				<div className="ml-[15px] flex w-[36px] flex-col items-center pt-[11px]">
					<svg viewBox="0 0 28 24" className="h-[23px] w-[28px]" fill="none" stroke="#555" strokeWidth="1.6">
						<path d="M1 1h26v17H1zM14 18v4M9 23h10" />
					</svg>
					<div className="mt-[7px] h-[4px] w-[36px] rounded-[2px] bg-[#117865]" />
				</div>
				<svg viewBox="0 0 18 30" className="ml-[40px] mt-[7px] h-[30px] w-[18px]" fill="none" stroke="#555" strokeWidth="1.8">
					<path d="M1 1h16v28H1zM8 25h2" />
				</svg>
				<svg viewBox="0 0 8 14" className="ml-[28px] mt-[15px] h-[14px] w-[8px]" fill="#c8c8c8">
					<path d="M7 0v14L1 7z" />
				</svg>
				<svg viewBox="0 0 8 14" className="ml-[25px] mt-[15px] h-[14px] w-[8px]" fill="#c8c8c8">
					<path d="M1 0v14l6-7z" />
				</svg>
			</div>
			<div className="flex w-[134px] items-center justify-center border-l border-[#cfcfcf] bg-white pt-[3px] text-[17px] text-[#3a3a3a]">Overview</div>
			<div className="flex w-[129px] flex-col items-center justify-center border-b-[6px] border-l border-[#117865] border-l-[#cfcfcf] bg-white pt-[7px] text-[17px] font-medium">TRENDS</div>
			<div className="flex w-[59px] items-center justify-center bg-[#117865]">
				<svg viewBox="0 0 16 16" className="h-[16px] w-[16px]" stroke="#fff" strokeWidth="3.4">
					<path d="M8 0v16M0 8h16" />
				</svg>
			</div>
		</div>
	);
}

function StatusBar() {
	return (
		<div className={`${ui} flex h-[34px] items-center border-t-[2px] border-[#e3e1df] bg-[#f3f2f1] text-[#555]`}>
			<span className="ml-[6px] pt-[2px] text-[17.5px]">Page 2 of 2</span>
			<span className="ml-auto text-[18px] font-semibold">-</span>
			<div className="ml-[7px] flex h-[17px] w-[150px] items-center">
				<div className="relative h-[1.5px] w-full bg-[#666]">
					<div className="absolute -top-[8px] left-[27px] h-[17px] w-[6px] bg-[#5a5a5a]" />
					<div className="absolute -top-[3px] left-[75px] h-[7px] w-[2px] bg-[#5a5a5a]" />
				</div>
			</div>
			<span className="ml-[8px] text-[20px] font-semibold">+</span>
			<span className="ml-[20px] text-[18px] tracking-[-0.3px]">46%</span>
			<svg viewBox="0 0 24 18" className="ml-[29px] mr-[25px] h-[18px] w-[24px]" fill="none" stroke="#555" strokeWidth="1.5">
				<path d="M.8.8h22.4v16.4H.8zM5 7V4h4M15 4h4v3M19 11v3h-4M9 14H5v-3" />
			</svg>
		</div>
	);
}

export default function App() {
	return (
		<div className="flex h-[1078px] w-[1918px] flex-col overflow-hidden bg-[#f3f2f1]">
			<TitleBar />
			<Ribbon />
			<div className="flex h-[750px]">
				<LeftRail />
				<div className="flex h-full w-[1755px] shrink-0 bg-[#1f3660]">
					<ReportPage />
				</div>
				<SidePanel label="Visualizations" w="w-[53px]" />
				<SidePanel label="Data" w="w-[49px]" />
			</div>
			<PageTabs />
			<StatusBar />
		</div>
	);
}
